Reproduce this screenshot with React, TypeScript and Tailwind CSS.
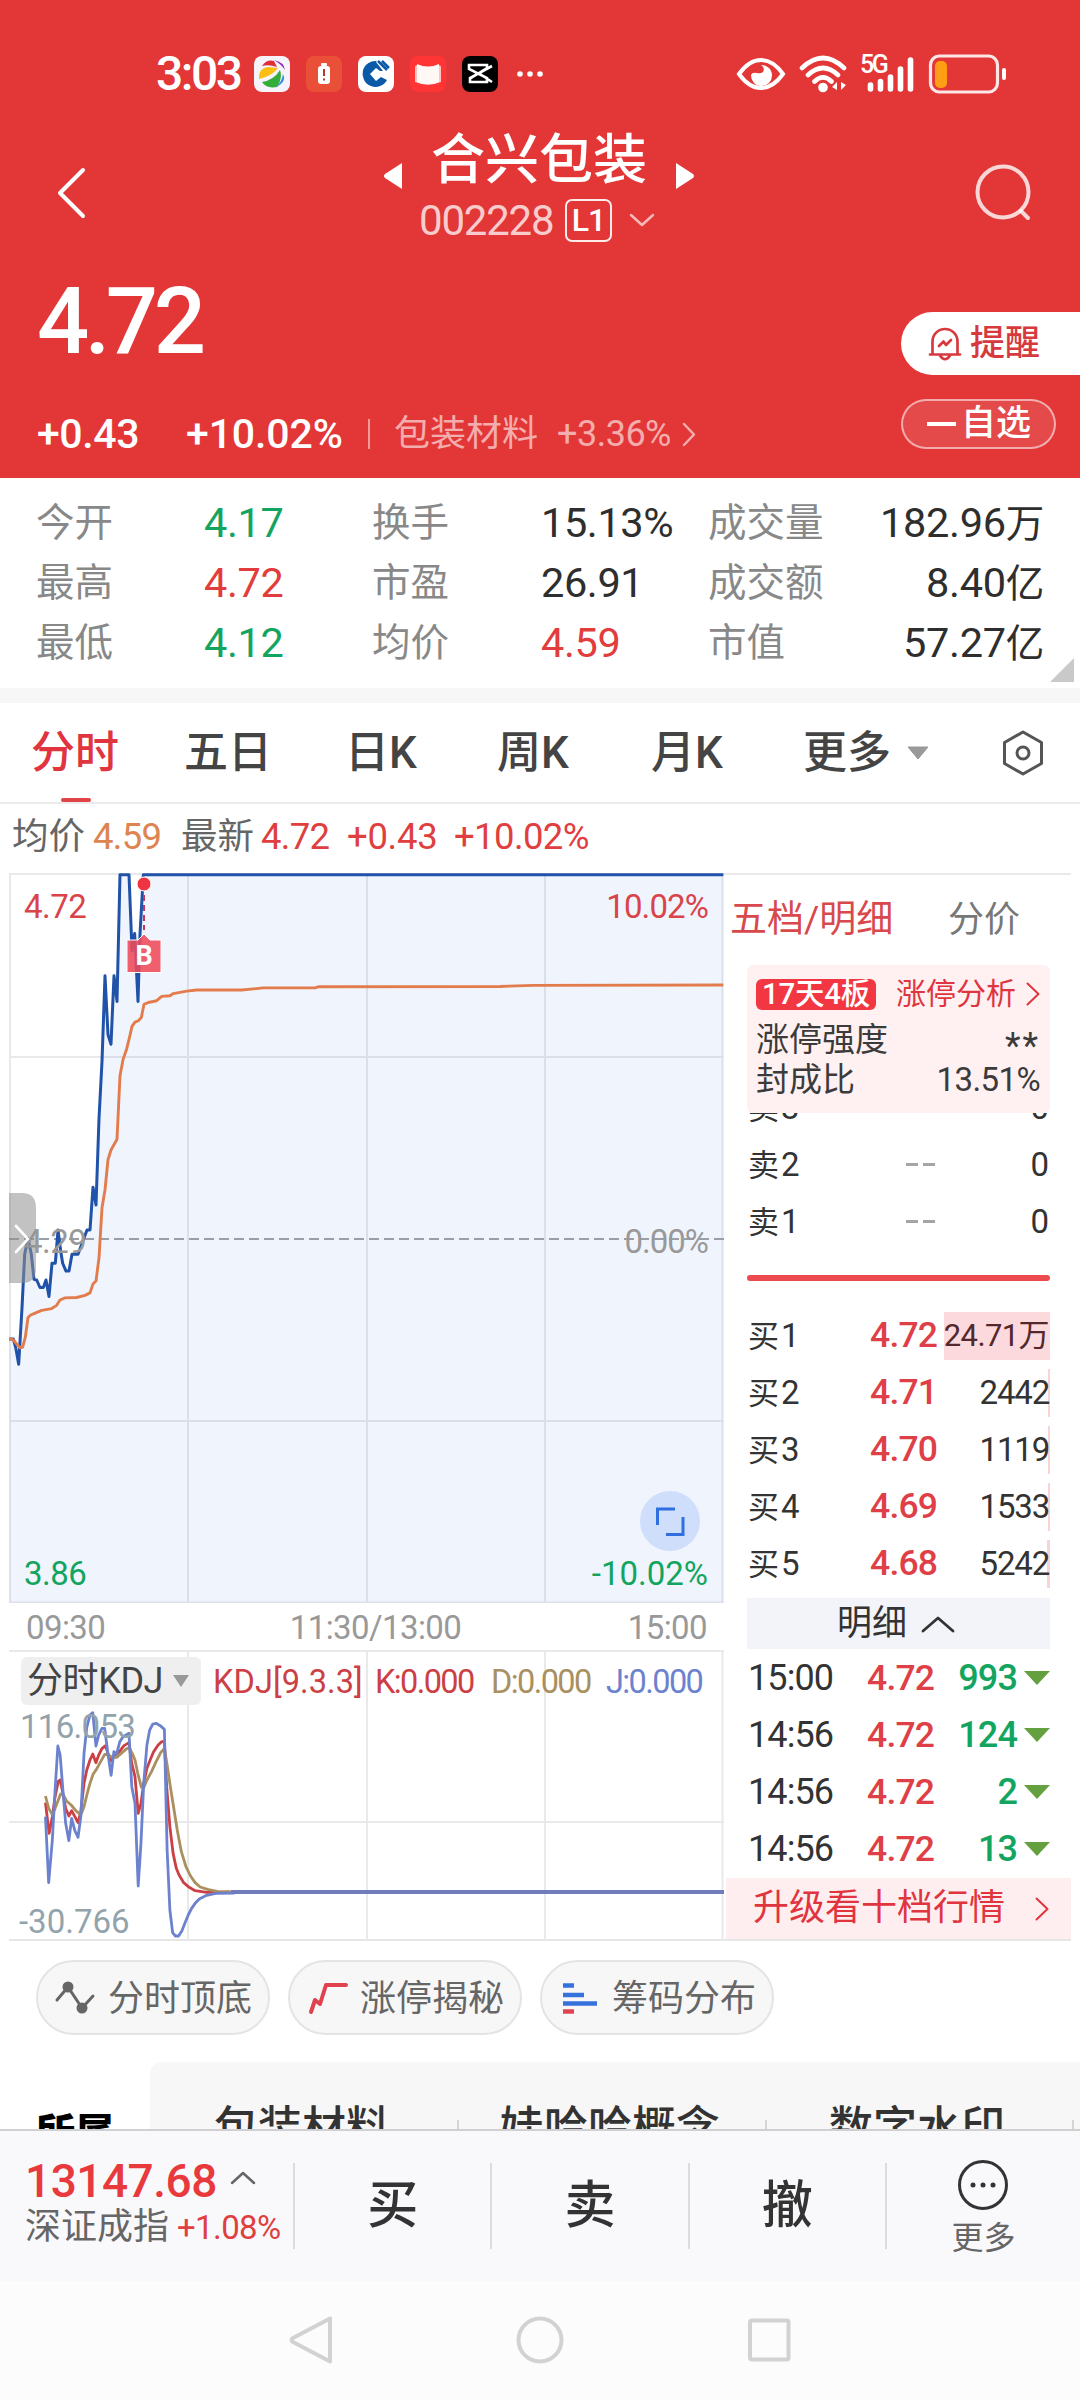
import React from "react";

const FONT = 'font-[Roboto,"Noto_Sans_CJK_SC",sans-serif]';

type ChevronProps = { className: string; d: string; box: string; stroke?: number };

function Stroke({ className, d, box, stroke = 2.5 }: ChevronProps) {
  return (
    <svg className={className} viewBox={box} fill="none" stroke="currentColor" strokeWidth={stroke} strokeLinecap="round" strokeLinejoin="round">
      <path d={d} />
    </svg>
  );
}

function StatusBar() {
  return (
    <div className="flex h-[36px] items-center pl-[156px]">
      <span className="w-[98px] text-[48px] font-medium leading-[36px] tracking-[-2.500px]">3:03</span>
      <div className="flex gap-[16px]">
        <svg className="h-[36px] w-[36px]" viewBox="0 0 36 36">
          <rect width="36" height="36" rx="8" fill="#f6f3fa" />
          <path d="M8 10Q13 3 20 5L23 11Q15 8 8 10Z" fill="#e02f3c" />
          <path d="M20 4Q30 6 31 14Q27 8 20 4Z" fill="#8b2bc4" />
          <path d="M5 21Q5 12 14 11L24 12Q18 20 5 23Z" fill="#fbbf14" />
          <path d="M8 26Q20 24 26 14Q29 22 23 31Q12 33 8 26Z" fill="#35ad3b" />
          <path d="M29 18Q33 26 22 31Q28 26 29 18Z" fill="#2f8fe0" />
        </svg>
        <svg className="h-[36px] w-[36px]" viewBox="0 0 36 36">
          <rect width="36" height="36" rx="8" fill="#ea4f38" />
          <rect x="15" y="7" width="6" height="3" rx="1" fill="#fff" />
          <rect x="12" y="10" width="12" height="18" rx="3" fill="#fff" />
          <path d="M18 13v7M18 22.500v2" stroke="#b8382a" strokeWidth="2" />
        </svg>
        <svg className="h-[36px] w-[36px]" viewBox="0 0 36 36">
          <rect width="36" height="36" rx="8" fill="#fff" />
          <path d="M19 5A13 13 0 1 0 29 24L23 21L18 25L12 18L18 12L22 15H25L18 6Z" fill="#0b5aa8" />
          <path d="M20 5L29 14M24 5L31 12" stroke="#0b5aa8" strokeWidth="2.500" />
        </svg>
        <svg className="h-[36px] w-[36px]" viewBox="0 0 36 36">
          <rect width="36" height="36" rx="8" fill="#ff3535" />
          <path d="M5 11Q5 9 9 9Q18 15 27 9Q31 9 31 11V26Q18 31 5 26Z" fill="#ffc4c0" />
          <path d="M7 8Q18 13 29 8V26Q18 31 7 26Z" fill="#fff8f5" />
        </svg>
        <svg className="h-[36px] w-[36px]" viewBox="0 0 36 36">
          <rect width="36" height="36" rx="8" fill="#000" />
          <path d="M30 10L8 22V26H25V22L7 13V9H25V12L9 22M18 18L30 26" fill="none" stroke="#fff" strokeWidth="2.600" />
        </svg>
      </div>
      <svg className="ml-[18px] h-[8px] w-[28px]" viewBox="0 0 28 8" fill="#fff">
        <circle cx="4" cy="4" r="2.800" />
        <circle cx="14" cy="4" r="2.800" />
        <circle cx="24" cy="4" r="2.800" />
      </svg>
      <svg className="ml-[192px] h-[34px] w-[50px]" viewBox="0 0 50 34">
        <path d="M3 17Q13 3 25 3Q37 3 47 17Q37 31 25 31Q13 31 3 17Z" fill="none" stroke="#fff" strokeWidth="4" />
        <path d="M25 8C30 11 28 18 21 16Q16 15 15 18A10.500 10.500 0 1 0 25 8Z" fill="#fff" />
      </svg>
      <svg className="ml-[13px] h-[38px] w-[48px]" viewBox="0 0 48 38" fill="none" stroke="#fff" strokeWidth="4.600" strokeLinecap="round">
        <path d="M3 13Q24-7 45 13M9 20Q24 6 39 20M15.500 26.500Q24 18 32.500 26.500" />
        <circle cx="24" cy="32.500" r="4.800" fill="#fff" stroke="none" />
        <path d="M38 27v8l-5-3zM42 27v8l5-5z" fill="#fff" stroke="none" />
      </svg>
      <div className="relative ml-[13px] h-[38px] w-[56px]">
        <span className="absolute left-0 top-[-1px] text-[25px] font-medium leading-[22px] tracking-[-2.500px]">5G</span>
        <svg className="h-[38px] w-[56px]" viewBox="0 0 56 38" stroke="#fff" strokeWidth="5.600" strokeLinecap="round">
          <path d="M10.500 30v4M20.500 26.500v7.500M30.500 22v12M40.500 14v20M50.500 5v29" />
        </svg>
      </div>
      <svg className="ml-[11px] h-[42px] w-[80px]" viewBox="0 0 80 42">
        <rect x="3.500" y="3" width="67" height="36" rx="9" fill="none" stroke="#fff" strokeOpacity=".88" strokeWidth="3.200" />
        <rect x="8" y="8" width="12" height="27" rx="5" fill="#ff9d14" />
        <rect x="75" y="15" width="4" height="12" rx="2" fill="#fff" />
      </svg>
    </div>
  );
}

function Header() {
  return (
    <header className="h-[478px] bg-[#e33637] pt-[56px] text-white">
      <StatusBar />
      <div className="mt-[37px] flex h-[126px] justify-between">
        <Stroke className="ml-[56px] mt-[38px] h-[52px] w-[30px]" box="0 0 30 52" d="M27 3L4 26L27 49" stroke={4} />
        <div className="ml-[18px] flex flex-col items-center">
          <div className="flex h-[60px] items-center">
            <svg className="mt-[34px] h-[26px] w-[19px]" viewBox="0 0 19 26" fill="#fff">
              <path d="M19 0V26L2 15Q0 13 2 11Z" />
            </svg>
            <span className="mx-[29px] mt-[3px] text-[54px] font-medium leading-[60px]">合兴包装</span>
            <svg className="mt-[34px] h-[26px] w-[19px]" viewBox="0 0 19 26" fill="#fff">
              <path d="M0 0V26L17 15Q19 13 17 11Z" />
            </svg>
          </div>
          <div className="mr-[4px] flex h-[62px] items-center">
            <span className="w-[146px] pt-px text-[42px] leading-[62px] tracking-[-1.200px] text-white/75">002228</span>
            <span className="flex h-[43px] w-[47px] items-center justify-center rounded-[7px] border-[2.500px] border-white/90 text-[32px] font-medium leading-[40px] tracking-[-1px]">L1</span>
            <Stroke className="ml-[17px] h-[14px] w-[26px] text-white/65" box="0 0 26 14" d="M2 2L13 12L24 2" />
          </div>
        </div>
        <svg className="mr-[46px] mt-[34px] h-[60px] w-[60px] text-white/80" viewBox="0 0 60 60" fill="none" stroke="currentColor" strokeWidth="4" strokeLinecap="round">
          <circle cx="29" cy="29" r="25.500" />
          <path d="M47 48L54 55" />
        </svg>
      </div>
      <div className="flex justify-between">
        <div className="pl-[37px] pt-[23px]">
          <div className="h-[86px] text-[92px] font-medium leading-[88px] tracking-[-4.500px]">4.72</div>
          <div className="mt-[40px] flex h-[60px] items-center text-[41px] leading-[60px]">
            <span className="w-[149px] font-medium tracking-[-0.400px]">+0.43</span>
            <span className="w-[182px] font-medium tracking-[-0.100px]">+10.02%</span>
            <span className="h-[30px] w-[2px] bg-white/50" />
            <span className="ml-[24px] w-[163px] text-[36px] text-white/60">包装材料</span>
            <span className="w-[125px] text-[36px] tracking-[-0.500px] text-white/60">+3.36%</span>
            <Stroke className="h-[25px] w-[14px] text-white/60" box="0 0 14 25" d="M2 2L12 12.500L2 23" />
          </div>
        </div>
        <div className="w-[179px] pt-[57px]">
          <div className="flex h-[63px] items-center rounded-l-full bg-white pl-[26px] text-[#d63a3e]">
            <svg className="h-[36px] w-[36px]" viewBox="0 0 36 36" fill="none" stroke="currentColor" strokeWidth="2.700" strokeLinecap="round" strokeLinejoin="round">
              <path d="M5.500 28V15.500A12.500 12.500 0 0 1 30.500 15.500V28M3 28.500H33M13 29.500Q18 37 23 29.500M12 20L16.500 15.500L19 19L24 14" />
            </svg>
            <span className="ml-[7px] text-[35px] font-medium leading-[62px]">提醒</span>
          </div>
          <div className="mt-[24px] flex h-[50px] w-[155px] items-center rounded-full border-2 border-white/55 bg-white/10 pl-[24px]">
            <span className="h-[4px] w-[29px] bg-white" />
            <span className="ml-[5px] text-[35px] font-medium leading-[50px]">自选</span>
          </div>
        </div>
      </div>
    </header>
  );
}

const stats = [
  ["今开", "4.17", "g", "换手", "15.13%", "k", "成交量", "182.96万"],
  ["最高", "4.72", "r", "市盈", "26.91", "k", "成交额", "8.40亿"],
  ["最低", "4.12", "g", "均价", "4.59", "r", "市值", "57.27亿"],
];
const tone: Record<string, string> = { g: "text-[#13a55f]", r: "text-[#e23c3c]", k: "text-[#2e2e2e]" };

function Stats() {
  return (
    <section className="relative h-[210px] bg-white pt-[15px]">
      {stats.map((s) => (
        <div key={s[0]} className="flex h-[60px] items-center pl-[36px] pr-[36px] text-[38.500px] leading-[60px] text-[#888]">
          <span className="w-[168px]">{s[0]}</span>
          <span className={"w-[168px] text-[41.500px] tracking-[-0.400px] " + tone[s[2]]}>{s[1]}</span>
          <span className="w-[169px]">{s[3]}</span>
          <span className={"w-[167px] whitespace-nowrap text-[41.500px] tracking-[-0.400px] " + tone[s[5]]}>{s[4]}</span>
          <span>{s[6]}</span>
          <span className="ml-auto text-[41.500px] tracking-[-0.300px] text-[#2e2e2e]">
            {s[7].slice(0, -1)}
            <span className="text-[38.500px]">{s[7].slice(-1)}</span>
          </span>
        </div>
      ))}
      <svg className="absolute bottom-[6px] right-[6px] h-[24px] w-[24px]" viewBox="0 0 24 24">
        <path d="M24 0V24H0Z" fill="#c9c9c9" />
      </svg>
    </section>
  );
}

function Tabs() {
  return (
    <nav className="relative flex h-[101px] items-center border-b-2 border-[#ebebeb] bg-white pl-[31px] text-[44px] font-medium leading-[60px] text-[#444]">
      <span className="w-[153px] text-[#e0353f]">分时</span>
      <span className="w-[161px]">五日</span>
      <span className="w-[152px]">日K</span>
      <span className="w-[154px]">周K</span>
      <span className="w-[152px]">月K</span>
      <span className="w-[104px]">更多</span>
      <svg className="h-[14px] w-[22px]" viewBox="0 0 22 14">
        <path d="M1 1H21L11 13Z" fill="#999" stroke="#999" strokeLinejoin="round" />
      </svg>
      <svg className="ml-[71px] h-[48px] w-[46px]" viewBox="0 0 46 48" fill="none" stroke="#555" strokeWidth="3" strokeLinejoin="round">
        <path d="M23 3L41.500 13.500V34.500L23 45L4.500 34.500V13.500Z" />
        <circle cx="23" cy="24" r="6" />
      </svg>
      <span className="absolute bottom-0 left-[61px] h-[4px] w-[30px] rounded-full bg-[#e0434a]" />
    </nav>
  );
}

const PRICE =
  "M28 1397L40 1397L48 1425L56 1468L66 1310L74 1160L84 1115L94 1160L102 1230L110 1232L120 1253L130 1253L138 1232L147 1278L156 1185L166 1185L174 1092L182 1150L188 1185L198 1207L207 1207L216 1160L234 1160L246 1130L261 1092L270 1092L279 972L288 1022L297 780L306 620L315 380L324 545L333 572L342 380L351 452L360 97L387 97L396 310L404 262L414 452L420 265L430 97L2170 97";
const AVERAGE =
  "M28 1397L40 1400L60 1422L68 1420L76 1392L84 1337L92 1330L102 1326L125 1317L155 1312L170 1303L180 1288L195 1282L230 1281L255 1275L270 1268L279 1243L288 1235L297 1170L306 1030L315 980L324 895L333 868L351 838L360 660L369 615L380 585L388 555L396 522L405 510L415 506L424 497L432 460L445 455L470 450L485 438L510 436L520 430L560 423L590 420L725 420L760 417L790 414L945 414L955 411L1500 410L1600 407L2170 406";

function PriceChart() {
  return (
    <div className="relative h-[730px] w-[715px] text-[33px] leading-[40px]">
      <svg className="h-[730px] w-[715px]" viewBox="0 0 715 730" fill="none">
        <path d="M0 1H715M0 184H715M0 548H715M0 729.500H715M1 0V730M179 0V730M358 0V730M536 0V730M713.500 0V730" stroke="#e9e9ea" strokeWidth="2" />
        <g transform="translate(-9 -33) scale(.333333 .357143)">
          <path d={PRICE + "V2136H28Z"} fill="#2560e0" fillOpacity=".07" />
        </g>
        <path d="M0 366H715" stroke="#9a9ea6" strokeWidth="2" strokeDasharray="10 5" />
        <g transform="translate(-9 -33) scale(.333333 .357143)" strokeLinejoin="round">
          <path d={PRICE} stroke="#1f52a8" strokeWidth="3" vectorEffect="non-scaling-stroke" />
          <path d={AVERAGE} stroke="#e37c4d" strokeWidth="2.900" vectorEffect="non-scaling-stroke" />
        </g>
        <path d="M135 12V57" stroke="#c8365c" strokeWidth="2" strokeDasharray="6 4" />
        <circle cx="135" cy="11" r="7" fill="#ef3340" stroke="#fff" />
        <path d="M118 67H129L135 61L141 67H152V99.500H118Z" fill="#ee4a5a" fillOpacity=".88" stroke="#fff" strokeWidth="1" />
      </svg>
      <span className="absolute left-[118px] top-[65px] w-[34px] text-center text-[27px] font-bold leading-[36px] text-white">B</span>
      <span className="absolute left-[15px] top-[14px] tracking-[-0.500px] text-[#d9434a]">4.72</span>
      <span className="absolute right-[16px] top-[14px] tracking-[-0.900px] text-[#d9434a]">10.02%</span>
      <span className="absolute left-[15px] top-[349px] tracking-[-0.500px] text-[#999]">4.29</span>
      <span className="absolute right-[16px] top-[349px] tracking-[-1px] text-[#999]">0.00%</span>
      <span className="absolute bottom-[9px] left-[15px] tracking-[-0.500px] text-[#13a55f]">3.86</span>
      <span className="absolute bottom-[9px] right-[16px] text-[#13a55f]">-10.02%</span>
      <svg className="absolute left-0 top-[320px] h-[90px] w-[27px]" viewBox="0 0 27 90" fill="none">
        <path d="M0 0H13Q27 0 27 15V75Q27 90 13 90H0Z" fill="#909090" fillOpacity=".55" />
        <path d="M7 33L19 46L7 59" stroke="#fff" strokeWidth="2.600" strokeLinecap="round" />
      </svg>
      <svg className="absolute left-[631px] top-[618px] h-[60px] w-[60px]" viewBox="0 0 60 60" fill="none" stroke="#2f6fe0" strokeWidth="3">
        <circle cx="30" cy="30" r="30" fill="#cfdefb" stroke="none" />
        <path d="M17.500 34V18H35M26 43.500H43V26" />
      </svg>
    </div>
  );
}

const K_LINE =
  "M99 488L107 580L114 530L120 470L127 424L131 420L137 460L143 505L150 528L156 512L163 530L170 548L176 515L183 430L189 390L196 360L202 342L209 368L215 345L222 326L230 317L236 345L242 362L250 345L260 335L270 317L281 308L287 370L294 410L301 520L307 490L313 430L320 385L327 360L334 337L344 316L352 305L358 305L363 440L370 560L377 640L384 685L390 705L400 728L412 742L425 752L450 757L500 756";
const D_LINE =
  "M99 468L106 505L114 524L120 505L127 480L132 462L138 465L145 483L155 495L165 512L176 525L183 500L190 460L196 430L203 402L210 388L218 368L228 343L236 344L244 352L254 352L264 340L274 328L281 322L288 340L294 360L300 400L308 442L314 440L320 420L330 395L340 365L350 338L358 325L364 375L371 440L378 500L386 570L395 635L405 680L415 708L425 728L436 741L452 748L475 755L520 756";
const J_LINE =
  "M99 530L106 728L114 600L120 450L126 318L131 345L137 450L143 550L150 602L156 535L163 572L170 592L176 530L183 340L189 262L196 225L202 218L209 318L215 285L222 265L228 265L235 340L242 406L248 335L254 342L261 305L268 290L281 280L287 440L294 490L301 738L307 610L313 430L320 315L326 270L333 252L340 250L349 257L358 268L364 630L370 810L376 878L382 888L389 888L396 873L402 852L410 825L417 806L425 790L434 777L450 766L470 760L510 759L520 756L1575 756";

function KdjChart() {
  return (
    <div className="relative h-[291px] w-[715px]">
      <svg className="h-[291px] w-[715px]" viewBox="0 0 715 291" fill="none">
        <path d="M0 1H715M0 172H715M179 0V291M358 0V291M536 0V291M713.500 0V291" stroke="#e9e9ea" strokeWidth="2" />
        <g transform="translate(-9 -10) scale(.459137 .333333)" strokeLinejoin="round">
          <path d={K_LINE} stroke="#cc3f45" strokeWidth="2.800" vectorEffect="non-scaling-stroke" />
          <path d={D_LINE} stroke="#aa8f5f" strokeWidth="2.800" vectorEffect="non-scaling-stroke" />
          <path d={J_LINE} stroke="#6c82cf" strokeWidth="2.800" vectorEffect="non-scaling-stroke" />
        </g>
        <path d="M222 242H715" stroke="#717cbd" strokeWidth="4" />
      </svg>
      <div className="absolute left-[12px] top-[7px] flex h-[48px] items-center whitespace-nowrap text-[32.500px] leading-[50px] tracking-[-1.600px]">
        <div className="flex h-[48px] w-[180px] items-center rounded-[6px] bg-[#efefef] pl-[6px] text-[36px] tracking-[-0.400px] text-[#444]">
          <span className="w-[146px]">分时KDJ</span>
          <svg className="h-[12px] w-[16px]" viewBox="0 0 16 12">
            <path d="M0 0H16L8 12Z" fill="#999" />
          </svg>
        </div>
        <span className="ml-[12px] w-[162px] pt-px tracking-[0.100px] text-[#cc3f45]">KDJ[9.3.3]</span>
        <span className="w-[116px] pt-px text-[#cc3f45]">K:0.000</span>
        <span className="w-[115px] pt-px text-[#aa8f5f]">D:0.000</span>
        <span className="pt-px text-[#6c82cf]">J:0.000</span>
      </div>
      <span className="absolute left-[11px] top-[57px] text-[33px] leading-[40px] tracking-[-0.700px] text-[#93a3ab]">116.053</span>
      <span className="absolute left-[10px] top-[252px] text-[33px] leading-[40px] text-[#93a3ab]">-30.766</span>
    </div>
  );
}

const bids = [
  ["买1", "4.72", "24.71万", "w-[106px] bg-[#fcd9dc]"],
  ["买2", "4.71", "2442", "w-[2px] bg-[#f8d4d7]"],
  ["买3", "4.70", "1119", "w-[2px] bg-[#f8d4d7]"],
  ["买4", "4.69", "1533", "w-[2px] bg-[#f8d4d7]"],
  ["买5", "4.68", "5242", "w-[3px] bg-[#f8d4d7]"],
];
const ticks = [
  ["15:00", "993"],
  ["14:56", "124"],
  ["14:56", "2"],
  ["14:56", "13"],
];

function OrderBook() {
  return (
    <aside className="flex w-[347px] flex-col border-t-2 border-[#e9e9ea] text-[#333]">
      <div className="flex h-[90px] items-center pl-[6px] text-[37px] leading-[90px]">
        <span className="w-[218px] text-[#d8484d]">五档/明细</span>
        <span className="text-[36px] text-[#777]">分价</span>
      </div>
      <div className="ml-[23px] w-[303px]">
        <div className="relative z-10 h-[148px] rounded-[6px] bg-[#fff1f1] pl-[9px] pr-[10px] pt-[9px]">
          <div className="flex h-[40px] items-center justify-between text-[30px] leading-[40px] text-[#e0353f]">
            <span className="flex h-[31px] w-[120px] items-center justify-center whitespace-nowrap rounded-[6px] bg-[#f23642] text-[29.500px] font-medium leading-[30px] tracking-[-0.300px] text-white">17天4板</span>
            <span className="ml-auto mr-[10px]">涨停分析</span>
            <Stroke className="h-[24px] w-[14px]" box="0 0 14 24" d="M1.500 1.500L12.500 12L1.500 22.500" stroke={2} />
          </div>
          <div className="mt-[4px] flex h-[44px] items-center justify-between text-[33px] leading-[44px] text-[#3b3b3b]">
            <span>涨停强度</span>
            <span className="pt-[11px] text-[36px] tracking-[2px]">**</span>
          </div>
          <div className="flex h-[36px] items-center justify-between text-[33px] leading-[36px] text-[#3b3b3b]">
            <span>封成比</span>
            <span className="tracking-[-0.600px]">13.51%</span>
          </div>
        </div>
        <div className="relative h-[138px] overflow-hidden text-[33px] leading-[57px]">
          <div className="-mt-[34px]">
            {["卖3", "卖2", "卖1"].map((n) => (
              <div key={n} className="flex h-[57px] items-center pl-[1px] pr-[1px]">
                <span className="w-[158px]">
                  <span className="text-[31px]">{n[0]}</span>
                  <span className="ml-[2px]">{n[1]}</span>
                </span>
                <span className="flex gap-[5px]">
                  <i className="h-[3px] w-[12px] bg-[#a5a5a5]" />
                  <i className="h-[3px] w-[12px] bg-[#a5a5a5]" />
                </span>
                <span className="ml-auto">0</span>
              </div>
            ))}
          </div>
        </div>
        <div className="mt-[24px] h-[6px] rounded-full bg-[#ec4a4e]" />
        <div className="mt-[26px]">
          {bids.map(([n, p, v, bar]) => (
            <div key={n} className="relative flex h-[57px] items-center pl-[1px] pr-[1px] text-[33px] leading-[57px]">
              <span className={"absolute right-0 top-[5px] h-[48px] " + bar} />
              <span className="w-[122px]">
                <span className="text-[31px]">{n[0]}</span>
                <span className="ml-[2px]">{n[1]}</span>
              </span>
              <span className="text-[35.500px] font-medium tracking-[-0.800px] text-[#df3f47]">{p}</span>
              <span className={"relative ml-auto " + (v.endsWith("万") ? "text-[31px] tracking-[-0.600px] text-[#53282d]" : "text-[33px] tracking-[-1.200px]")}>{v}</span>
            </div>
          ))}
        </div>
        <div className="mt-[6px] flex h-[51px] items-center bg-[#f3f4f9] pl-[90px] text-[35px] leading-[50px]">
          <span className="w-[84px]">明细</span>
          <Stroke className="h-[18px] w-[34px]" box="0 0 34 18" d="M2 16L17 3L32 16" stroke={2.8} />
        </div>
        {ticks.map(([t, v], i) => (
          <div key={i} className="flex h-[57px] items-center pl-[1px] text-[36px] leading-[60px]">
            <span className="w-[119px] pt-px tracking-[-0.900px]">{t}</span>
            <span className="pt-px text-[35.500px] font-medium tracking-[-0.800px] text-[#df3f47]">4.72</span>
            <span className="ml-auto mr-[7px] pt-px font-medium tracking-[-0.900px] text-[#13a55f]">{v}</span>
            <svg className="h-[14px] w-[26px]" viewBox="0 0 26 14">
              <path d="M0 0H26L13 14Z" fill="#65a040" />
            </svg>
          </div>
        ))}
      </div>
      <div className="ml-[2px] mt-auto flex h-[61px] items-center bg-[#ffeeef] pl-[27px] text-[36px] leading-[63px] text-[#e0353f]">
        升级看十档行情
        <Stroke className="ml-[30px] h-[24px] w-[14px]" box="0 0 14 24" d="M1.500 1.500L12.500 12L1.500 22.500" stroke={2} />
      </div>
    </aside>
  );
}

function Pill({ icon, label }: { icon: React.ReactNode; label: string }) {
  return (
    <div className="flex h-[75px] w-[234px] items-center rounded-full border-2 border-[#e4e4e4] bg-[#f7f7f7] pl-[16px] text-[36px] leading-[72px] text-[#666]">
      <svg className="h-[40px] w-[44px]" viewBox="0 0 44 40" fill="none" strokeLinecap="round" strokeLinejoin="round">
        {icon}
      </svg>
      <span className="ml-[10px] pt-[2px]">{label}</span>
    </div>
  );
}

export default function App() {
  return (
    <div className={"flex h-[2400px] w-[1080px] flex-col overflow-hidden bg-white " + FONT}>
      <Header />
      <Stats />
      <div className="h-[15px] bg-[#f7f7f7]" />
      <Tabs />
      <div className="flex h-[69px] items-center pb-[3px] pl-[12px] text-[36.500px] leading-[60px] text-[#666]">
        <span className="w-[81px]">均价</span>
        <span className="w-[88px] tracking-[-0.700px] text-[#dd8450]">4.59</span>
        <span className="w-[80px]">最新</span>
        <span className="w-[86px] tracking-[-0.700px] text-[#df3f3f]">4.72</span>
        <span className="w-[107px] tracking-[-0.300px] text-[#df3f3f]">+0.43</span>
        <span className="tracking-[-0.600px] text-[#df3f3f]">+10.02%</span>
      </div>
      <div className="ml-[9px] flex h-[1068px] w-[1062px] border-b-2 border-[#e6e6e7]">
        <div className="w-[715px] shrink-0">
          <PriceChart />
          <div className="grid h-[47px] grid-cols-[122px_1fr_104px] items-center px-[17px] text-[33px] leading-[50px] tracking-[-0.600px] text-[#999]">
            <span>09:30</span>
            <span className="text-center">11:30/13:00</span>
            <span className="text-right">15:00</span>
          </div>
          <KdjChart />
        </div>
        <OrderBook />
      </div>
      <div className="flex h-[121px] shrink-0 gap-[18px] pl-[36px] pt-[19px]">
        <Pill
          label="分时顶底"
          icon={
            <g stroke="#666" strokeWidth="3">
              <path d="M3 22L14 9L28 30L39 18" />
              <circle cx="14" cy="9" r="4" fill="#666" />
              <circle cx="28" cy="30" r="4" fill="#666" />
            </g>
          }
        />
        <Pill label="涨停揭秘" icon={<path d="M5 34L9 22L14 26L20 7H40" stroke="#e0434f" strokeWidth="4" />} />
        <Pill
          label="筹码分布"
          icon={
            <g strokeWidth="4.500" strokeLinecap="butt">
              <path d="M5 7.500H16M5 17H26M5 25.500H39" stroke="#3672dc" />
              <path d="M5 33.500H16" stroke="#df4450" />
            </g>
          }
        />
      </div>
      <div className="flex h-[67px] shrink-0 overflow-hidden">
        <span className="w-[150px] pl-[36px] pt-[46px] text-[39px] font-black leading-[50px] text-black">所属</span>
        <div className="flex h-[90px] w-[930px] rounded-tl-[12px] bg-[#f7f7f7] pt-[36px] text-[44px] font-medium leading-[60px] text-[#333]">
          <span className="w-[307px] pl-[64px]">包装材料</span>
          <span className="mt-[22px] h-[40px] w-[2px] bg-[#d5d5d5]" />
          <span className="w-[306px] pl-[41px]">娃哈哈概念</span>
          <span className="mt-[22px] h-[40px] w-[2px] bg-[#d5d5d5]" />
          <span className="w-[305px] pl-[62px]">数字水印</span>
          <span className="mt-[22px] h-[40px] w-[2px] bg-[#d5d5d5]" />
        </div>
      </div>
      <footer className="flex h-[152px] shrink-0 border-t-2 border-[#d0d0d3] bg-[#f9f9fc] pt-[23px]">
        <div className="w-[293px] pl-[25px] pt-[3px]">
          <div className="flex h-[48px] items-center text-[46px] leading-[48px] text-[#e8393c]">
            <span className="w-[205px] font-medium tracking-[-0.500px]">13147.68</span>
            <Stroke className="-mt-[6px] h-[14px] w-[26px] text-[#666]" box="0 0 26 14" d="M2 12L13 2L24 12" />
          </div>
          <div className="mt-px flex h-[42px] items-center text-[36px] leading-[42px] text-[#666]">
            <span className="w-[152px]">深证成指</span>
            <span className="pt-px text-[33px] tracking-[-0.600px] text-[#df3f3f]">+1.08%</span>
          </div>
        </div>
        {["买", "卖", "撤"].map((t) => (
          <div key={t} className="flex w-[197.300px]">
            <span className="mt-[9px] h-[86px] w-[2px] bg-[#dcdcdf]" />
            <span className="mt-[21px] w-full text-center text-[51px] font-medium leading-[62px] text-[#333]">{t}</span>
          </div>
        ))}
        <span className="mt-[9px] h-[86px] w-[2px] bg-[#dcdcdf]" />
        <div className="flex flex-1 flex-col items-center pt-[5px] text-[#333]">
          <svg className="h-[52px] w-[52px]" viewBox="0 0 52 52" fill="none">
            <circle cx="26" cy="26" r="23.500" stroke="#333" strokeWidth="3" />
            <g fill="#333">
              <circle cx="16" cy="26" r="2.500" />
              <circle cx="26" cy="26" r="2.500" />
              <circle cx="36" cy="26" r="2.500" />
            </g>
          </svg>
          <span className="mt-[6px] text-[32px] leading-[42px] text-[#666]">更多</span>
        </div>
      </footer>
      <div className="flex h-[119px] shrink-0 justify-center gap-[181px] bg-[#fcfcfc] pt-[34px]">
        <svg className="h-[50px] w-[46px]" viewBox="0 0 46 50" fill="none" stroke="#d2d2d2" strokeWidth="4" strokeLinejoin="round">
          <path d="M42 3.500V46.500L5 27Q2 25 5 23Z" />
        </svg>
        <svg className="h-[50px] w-[50px]" viewBox="0 0 50 50" fill="none" stroke="#d2d2d2" strokeWidth="4">
          <circle cx="25" cy="25" r="21.500" />
        </svg>
        <svg className="h-[50px] w-[46px]" viewBox="0 0 46 50" fill="none" stroke="#d2d2d2" strokeWidth="4">
          <rect x="4" y="5.500" width="38.500" height="39" rx="2" />
        </svg>
      </div>
    </div>
  );
}
